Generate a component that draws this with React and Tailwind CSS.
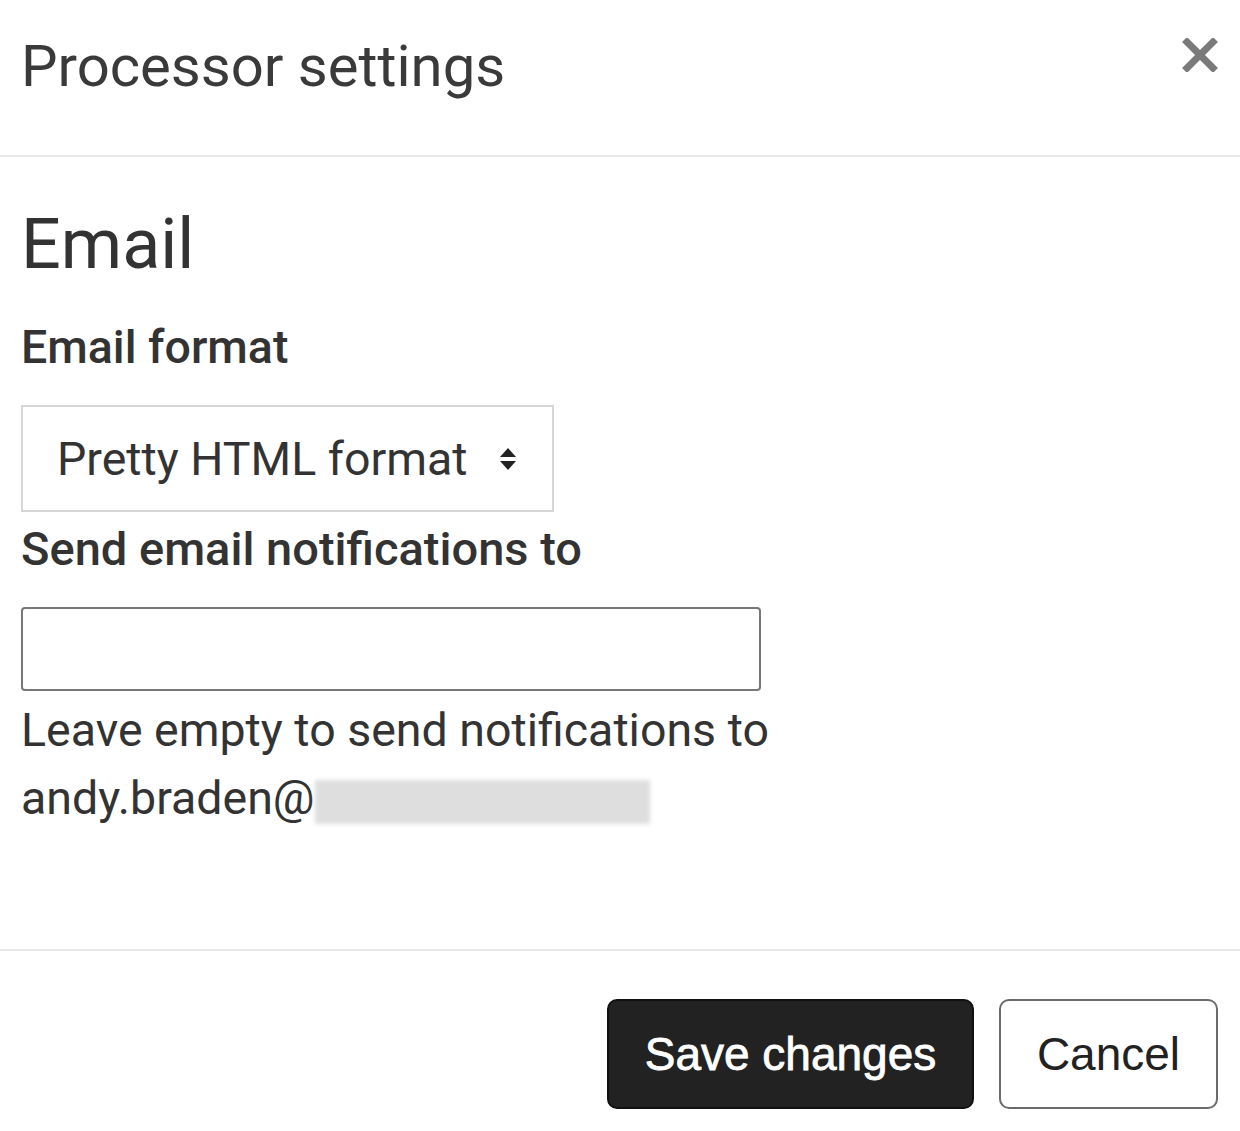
import React from 'react';

const CloseIcon = () => (
  <svg width="36" height="34" viewBox="0 0 36 34" className="text-[#7a7a7a]">
    <path d="M5 4 L31 30 M31 4 L5 30" stroke="currentColor" strokeWidth="7" strokeLinecap="square" />
  </svg>
);

const SelectArrows = () => (
  <svg width="20" height="24" viewBox="0 0 20 24" className="text-[#222]">
    <path d="M10 1 L18 10 L2 10 Z" fill="currentColor" />
    <path d="M2 14 L18 14 L10 23 Z" fill="currentColor" />
  </svg>
);

const ProcessorSettings = () => {
  return (
    <div className="w-[1240px] h-[1131px] bg-white font-['Roboto',sans-serif] text-[#333] overflow-hidden">
      {/* header */}
      <div className="h-[157px] border-b-2 border-[#e8e8e8] flex items-start justify-between pl-[21px] pr-[22px]">
        <h5 className="mt-[31px] text-[58px] leading-[70px] font-normal text-[#3a3a3a]">Processor settings</h5>
        <button className="mt-[38px]" aria-label="Close">
          <CloseIcon />
        </button>
      </div>

      {/* body */}
      <div className="h-[792px] px-[21px] pt-[45px]">
        <h3 className="text-[70px] leading-[84px] font-normal text-[#333]">Email</h3>

        <label className="block mt-[28px] text-[46.5px] leading-[66px] font-medium text-[#333]">Email format</label>
        <div className="mt-[25px] w-[533px] h-[107px] border-2 border-[#d6d6d6] flex items-center justify-between pl-[34px] pr-[34px]">
          <span className="text-[46.5px] leading-[54px] text-[#333]">Pretty HTML format</span>
          <SelectArrows />
        </div>

        <label className="block mt-[4px] text-[47px] leading-[66px] font-medium text-[#333]">Send email notifications to</label>
        <div className="mt-[25px] w-[740px] h-[84px] border-2 border-[#777] rounded-[4px] bg-white"></div>

        <p className="mt-[5px] text-[46.5px] leading-[68px] text-[#333]">
          Leave empty to send notifications to
          <br />
          andy.braden@
          <span className="inline-block align-middle w-[335px] h-[44px] bg-[#dedede] blur-[2px]"></span>
        </p>
      </div>

      {/* footer */}
      <div className="border-t-2 border-[#e8e8e8] flex justify-end gap-[25px] pr-[22px] pt-[48px] font-['Liberation_Sans',Arial,sans-serif]">
        <button className="w-[367px] h-[110px] rounded-[10px] bg-[#222] border-2 border-[#111] text-white text-[46px] [-webkit-text-stroke:0.8px_white]">
          Save changes
        </button>
        <button className="w-[219px] h-[110px] rounded-[10px] bg-white border-2 border-[#6b6b6b] text-[#222] text-[46px]">
          Cancel
        </button>
      </div>
    </div>
  );
};

export default function App() {
  return <ProcessorSettings />;
}
